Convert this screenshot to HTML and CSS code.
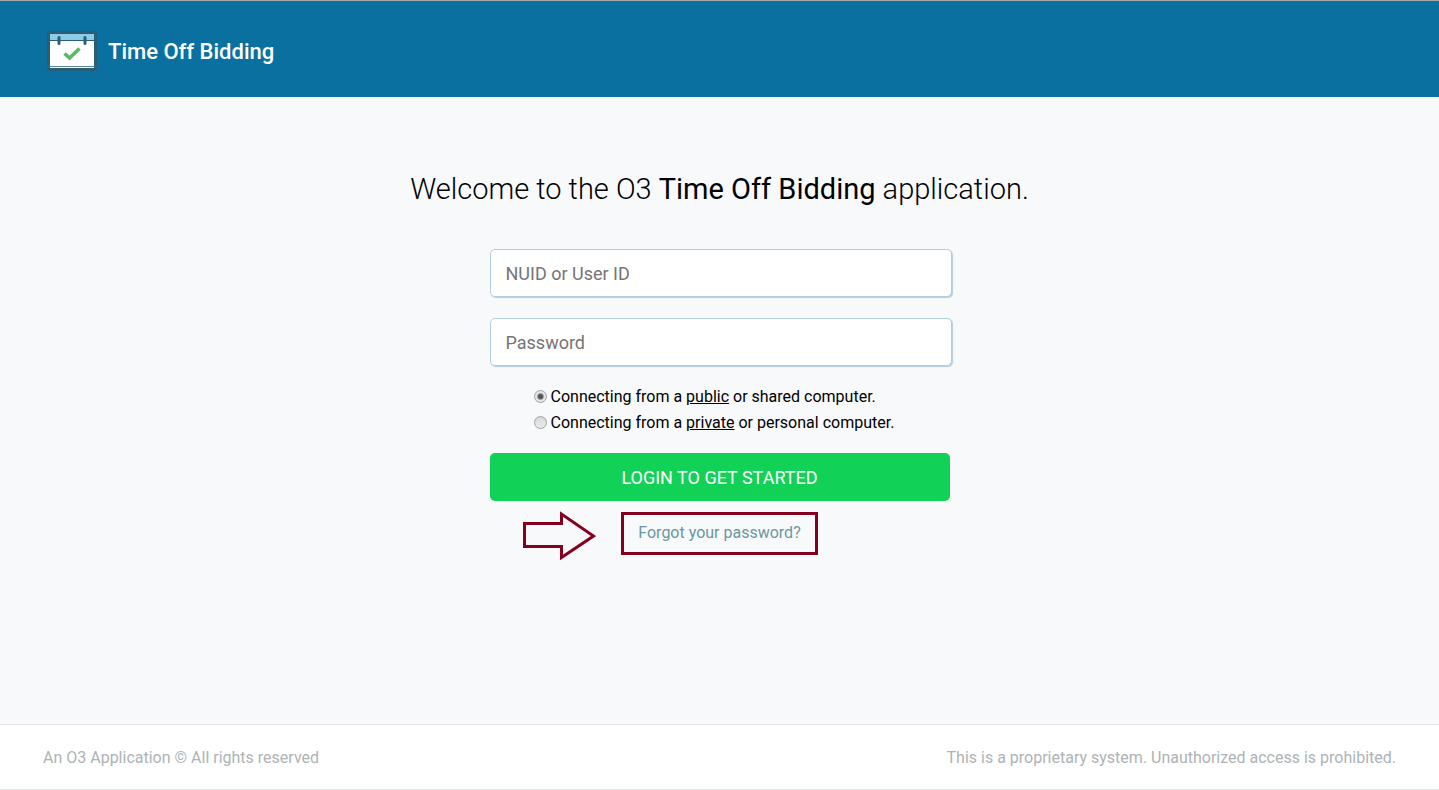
FILE: index.html
```html
<!DOCTYPE html>
<html lang="en">
<head>
    <meta charset="UTF-8">
    <meta name="viewport" content="width=device-width, initial-scale=1.0">
    <title>Time Off Bidding</title>
    <link rel="stylesheet" href="styles.css">
</head>
<body>

    <header class="header">
        <svg class="logo" width="50" height="40" viewBox="0 0 50 40" aria-hidden="true">
            <rect x="1.500" y="1.500" width="47" height="37" fill="#fff" stroke="#285e78" stroke-width="3"/>
            <rect x="3" y="3" width="44" height="6" fill="#8ccbe4"/>
            <path d="M2 9.500H48" stroke="#285e78" stroke-width="1"/>
            <path d="M2 35.500H48" stroke="#5b8296" stroke-width="1"/>
            <path d="M12 6.500V12.500M38 6.500V12.500" stroke="#285e78" stroke-width="3" stroke-linecap="round"/>
            <path d="M17.500 22.500L22.500 27L32.500 17.500" fill="none" stroke="#57bb63" stroke-width="3.500"/>
        </svg>
        <span class="app-name">Time Off Bidding</span>
    </header>

    <main class="main">
        <h1 class="welcome">Welcome to the O3 <strong>Time Off Bidding</strong> application.</h1>

        <form class="login-form">
            <input class="field" type="text" placeholder="NUID or User ID" aria-label="NUID or User ID">
            <input class="field" type="password" placeholder="Password" aria-label="Password">

            <div class="connection">
                <label class="option">
                    <input class="radio" type="radio" name="connection" value="public" checked>
                    <span>Connecting from a <u>public</u> or shared computer.</span>
                </label>
                <label class="option">
                    <input class="radio" type="radio" name="connection" value="private">
                    <span>Connecting from a <u>private</u> or personal computer.</span>
                </label>
            </div>

            <button class="login-button" type="submit">LOGIN TO GET STARTED</button>
        </form>

        <div class="forgot">
            <svg class="arrow" width="74" height="50" viewBox="0 0 74 50" aria-hidden="true">
                <path d="M2.500 13.500H39.500V4L71.500 26L39.500 47.500V36.500H2.500Z" fill="none" stroke="#85001f" stroke-width="3"/>
            </svg>
            <a class="forgot-link" href="#">Forgot your password?</a>
        </div>
    </main>

    <footer class="footer">
        <span>An O3 Application © All rights reserved</span>
        <span>This is a proprietary system. Unauthorized access is prohibited.</span>
    </footer>

</body>
</html>
```
FILE: styles.css
```css
* {
    box-sizing: border-box;
}

body {
    display: flex;
    flex-direction: column;
    min-height: 100vh;
    margin: 0;
    background-color: #f8f9fb;
    color: #000;
    font-family: Roboto, "Liberation Sans", sans-serif;
    font-size: 16px;
}

.header {
    display: flex;
    align-items: center;
    gap: 11px;
    padding: 30px 47px 26px;
    border-top: 1px solid #a6a9ad;
    background-color: #0a70a0;
}

.app-name {
    color: #fff;
    font-size: 22px;
    font-weight: 500;
}

.main {
    display: flex;
    flex: 1;
    flex-direction: column;
    align-items: center;
    padding: 72px 16px 0;
}

.welcome {
    margin: 0 0 40px;
    font-size: 29px;
    font-weight: 300;
    line-height: 40px;
    text-align: center;
}

.welcome strong {
    font-weight: 400;
}

.login-form {
    width: 100%;
    max-width: 460px;
}

/* Fields reach past the button by the width of their borders */
.field {
    display: block;
    width: calc(100% + 2px);
    height: 48px;
    margin: 0 0 21px;
    padding: 0 15px;
    border: 1px solid #b3cedb;
    border-radius: 5px;
    background-color: #fff;
    box-shadow: 1px 1px 1px #b3cedb;
    font-family: inherit;
    font-size: 18px;
}

.field::placeholder {
    color: #757575;
}

.connection {
    margin-top: -3px;
    margin-bottom: 17px;
    padding-left: 44px;
}

.option {
    display: flex;
    align-items: center;
    gap: 4px;
    line-height: 26px;
}

.radio {
    width: 13px;
    height: 13px;
    margin: 0 0 2px;
    border: 1px solid #a2a2a2;
    border-radius: 50%;
    background: linear-gradient(#d8d8d8, #ececec);
    appearance: none;
}

.radio:checked {
    background: radial-gradient(circle, #555 0 2px, #e6e6e6 4px);
}

.login-button {
    display: block;
    width: 100%;
    height: 48px;
    border: none;
    border-radius: 5px;
    background-color: #12d157;
    color: #fff;
    font-family: inherit;
    font-size: 18px;
    cursor: pointer;
}

/* The equal outer columns keep the link centered beside the arrow */
.forgot {
    display: grid;
    grid-template-columns: 1fr auto 1fr;
    gap: 25px;
    align-items: start;
    width: 100%;
    margin-top: 9px;
}

.arrow {
    justify-self: end;
}

.forgot-link {
    margin-top: 2px;
    padding: 8px 14px 9px;
    border: 3px solid #85001f;
    color: #6a979e;
    line-height: 20px;
    text-decoration: none;
}

.footer {
    display: flex;
    justify-content: space-between;
    gap: 24px;
    padding: 21px 43px 19px;
    border-top: 1px solid #e3e5e8;
    border-bottom: 1px solid #e3e5e8;
    background-color: #fff;
    color: #aeb3b6;
    line-height: 24px;
}
```
